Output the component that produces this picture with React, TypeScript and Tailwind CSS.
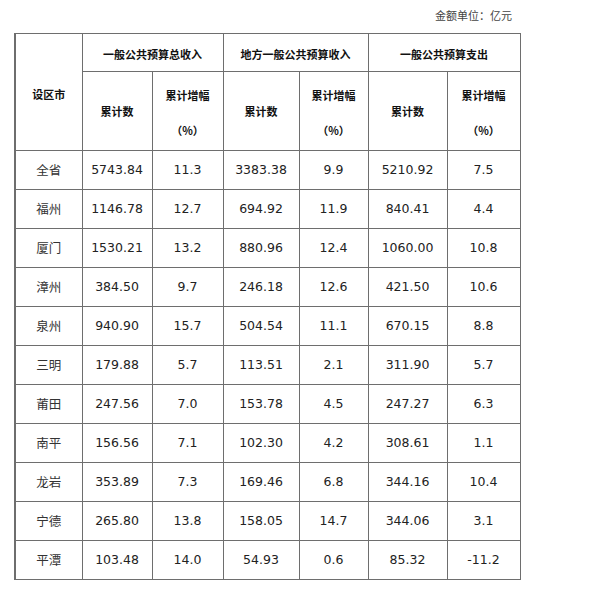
import React from "react";

const rows: [string, string, string, string, string, string, string][] = [
  ["全省", "5743.84", "11.3", "3383.38", "9.9", "5210.92", "7.5"],
  ["福州", "1146.78", "12.7", "694.92", "11.9", "840.41", "4.4"],
  ["厦门", "1530.21", "13.2", "880.96", "12.4", "1060.00", "10.8"],
  ["漳州", "384.50", "9.7", "246.18", "12.6", "421.50", "10.6"],
  ["泉州", "940.90", "15.7", "504.54", "11.1", "670.15", "8.8"],
  ["三明", "179.88", "5.7", "113.51", "2.1", "311.90", "5.7"],
  ["莆田", "247.56", "7.0", "153.78", "4.5", "247.27", "6.3"],
  ["南平", "156.56", "7.1", "102.30", "4.2", "308.61", "1.1"],
  ["龙岩", "353.89", "7.3", "169.46", "6.8", "344.16", "10.4"],
  ["宁德", "265.80", "13.8", "158.05", "14.7", "344.06", "3.1"],
  ["平潭", "103.48", "14.0", "54.93", "0.6", "85.32", "-11.2"],
];

const cjk = "font-['Noto_Sans_CJK_SC',sans-serif]";
const cell = "border border-[#6e6e6e] text-center";

export default function App() {
  return (
    <div className="w-[600px] h-[600px] bg-white">
      <div className="flex justify-end pr-[88px] pt-[7px] h-[33px]">
        <span className="text-[11px] text-[#444] font-['Noto_Sans_CJK_SC',serif]">
          金额单位：亿元
        </span>
      </div>
      <table className="ml-[14px] border-collapse table-fixed w-[505px]">
        <colgroup>
          <col className="w-[67px]" />
          <col className="w-[70px]" />
          <col className="w-[71px]" />
          <col className="w-[76px]" />
          <col className="w-[69px]" />
          <col className="w-[79px]" />
          <col className="w-[73px]" />
        </colgroup>
        <thead className={`${cjk} text-[11px] font-bold text-[#111]`}>
          <tr className="h-[38px]">
            <th rowSpan={2} className={`${cell} border-l-2 align-middle pt-[4px]`}>
              设区市
            </th>
            <th colSpan={2} className={`${cell} pt-[4px]`}>一般公共预算总收入</th>
            <th colSpan={2} className={`${cell} pt-[4px]`}>地方一般公共预算收入</th>
            <th colSpan={2} className={`${cell} pt-[4px]`}>一般公共预算支出</th>
          </tr>
          <tr className="h-[79px]">
            {[0, 1, 2].map((i) => (
              <React.Fragment key={i}>
                <th className={cell}>累计数</th>
                <th className={`${cell} leading-[35px] pt-[3px]`}>
                  <div>累计增幅</div>
                  <div>（%）</div>
                </th>
              </React.Fragment>
            ))}
          </tr>
        </thead>
        <tbody>
          {rows.map((r) => (
            <tr key={r[0]} className="h-[39px]">
              <td className={`${cell} border-l-2 ${cjk} text-[12.5px] text-[#333]`}>
                {r[0]}
              </td>
              {r.slice(1).map((v, j) => (
                <td
                  key={j}
                  className={`${cell} font-['DejaVu_Sans',sans-serif] text-[12.5px] text-[#222]`}
                >
                  {v}
                </td>
              ))}
            </tr>
          ))}
        </tbody>
      </table>
    </div>
  );
}
